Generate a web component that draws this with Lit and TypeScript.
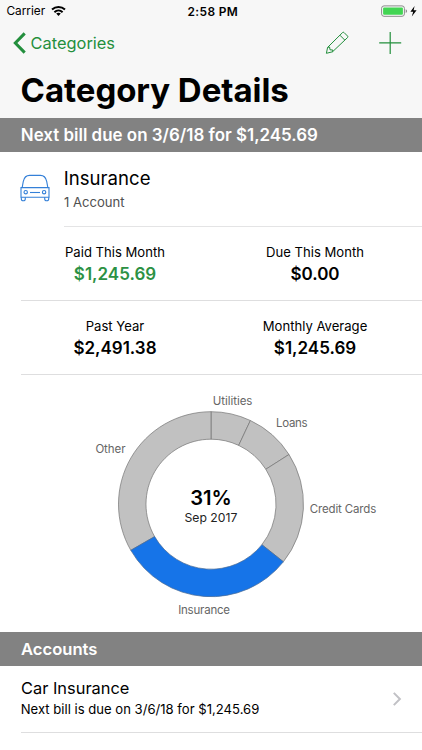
import { LitElement, html, svg, css } from "lit";
import { customElement } from "lit/decorators.js";

interface Slice {
  name: string;
  from: number;
  to: number;
  active?: boolean;
  x: number;
  y: number;
  width: number;
}

const CX = 211;
const CY = 129.2;
const OUTER = 92.5;
const INNER = 65;

const slices: Slice[] = [
  { name: "Utilities", from: 0, to: 25.2, x: 213.6, y: 30, width: 38.4 },
  { name: "Loans", from: 25.2, to: 57.5, x: 276.9, y: 52.4, width: 30.3 },
  { name: "Credit Cards", from: 57.5, to: 128.5, x: 310.6, y: 138.3, width: 65.3 },
  { name: "Other", from: 240.1, to: 360, x: 96.2, y: 78.2, width: 28.9 },
  { name: "Insurance", from: 128.5, to: 240.1, active: true, x: 179, y: 239.2, width: 50.6 },
];

const point = (angle: number, radius: number) => {
  const a = (angle * Math.PI) / 180;
  return `${(CX + radius * Math.sin(a)).toFixed(2)} ${(CY - radius * Math.cos(a)).toFixed(2)}`;
};

const ring = ({ from, to }: Slice) =>
  `M${point(from, OUTER)}A${OUTER} ${OUTER} 0 0 1 ${point(to, OUTER)}` +
  `L${point(to, INNER)}A${INNER} ${INNER} 0 0 0 ${point(from, INNER)}Z`;

const stats = [
  [
    { label: "Paid This Month", value: "$1,245.69", paid: true },
    { label: "Due This Month", value: "$0.00", paid: false },
  ],
  [
    { label: "Past Year", value: "$2,491.38", paid: false },
    { label: "Monthly Average", value: "$1,245.69", paid: false },
  ],
];

@customElement("spending-chart")
export class SpendingChart extends LitElement {
  static styles = css`
    :host { display: block; height: 257px; }
    svg { display: block; }
    .slice { fill: #c1c1c1; stroke: #747474; stroke-width: 0.7; }
    .active { fill: #1674e8; stroke: #4b6a92; }
    .label { font-size: 11.5px; fill: #666; }
    .percent { font-size: 20.2px; font-weight: 600; fill: #000; }
    .month { font-size: 12.2px; fill: #222; }
  `;

  render() {
    return html`<svg width="422" height="257" viewBox="0 0 422 257">
      ${slices.map((s) => svg`
        <path class="slice ${s.active ? "active" : ""}" d=${ring(s)} />
        <text class="label" x=${s.x - 0.8} y=${s.y} textLength=${s.width + 1.2}>${s.name}</text>`)}
      <text class="percent" x="211" y="129.9" text-anchor="middle">31%</text>
      <text class="month" x="210.9" y="146.6" text-anchor="middle">Sep 2017</text>
    </svg>`;
  }
}

@customElement("app-root")
export class AppRoot extends LitElement {
  static styles = css`
    :host {
      display: block;
      width: 422px;
      height: 750px;
      overflow: hidden;
      background: #fff;
      color: #000;
      font-family: Inter, "Liberation Sans", sans-serif;
      white-space: nowrap;
    }
    svg { display: block; flex: none; }
    .header { height: 118px; background: #f7f7f7; }
    .status {
      display: grid;
      grid-template-columns: 1fr auto 1fr;
      align-items: center;
      height: 22px;
      padding: 0 4px 0 6.4px;
      font-size: 11.85px;
    }
    .carrier { display: flex; align-items: center; gap: 6px; }
    .time { font-size: 11.9px; font-weight: 600; letter-spacing: 0.4px; padding-left: 1.4px; }
    .power { display: flex; justify-content: flex-end; align-items: center; }
    .nav {
      display: flex;
      align-items: center;
      height: 42px;
      padding: 0 20px 0 13px;
      color: #238f3d;
    }
    .back { display: flex; align-items: center; gap: 4.6px; flex: 1; font-size: 16.4px; }
    .actions { display: flex; align-items: center; gap: 29px; }
    .title {
      margin: 0;
      padding-left: 20.6px;
      font-size: 33px;
      letter-spacing: -0.05px;
      line-height: 52px;
      font-weight: 700;
    }
    .band {
      height: 34px;
      padding-left: 20.8px;
      background: #828282;
      color: #fff;
      font-size: 16.95px;
      line-height: 34px;
      font-weight: 600;
    }
    .accounts { font-size: 16.6px; padding-left: 21px; }
    .category { display: flex; height: 75px; padding-left: 20px; }
    .car { margin: 22px 14px 0 0; }
    .summary {
      flex: 1;
      padding-top: 14px;
      border-bottom: 1px solid #e4e4e5;
      line-height: 24px;
    }
    .name { font-size: 18.6px; line-height: 25px; margin: 0 0 -1px -0.2px; }
    .count { font-size: 13.1px; color: #505050; }
    .stats {
      display: grid;
      grid-template-columns: 200px 200px;
      box-sizing: border-box;
      height: 74px;
      margin-left: 21px;
      padding: 14px 0 0;
      border-bottom: 1px solid #dededf;
      text-align: center;
      line-height: 22px;
    }
    .stat { margin-left: -6px; margin-right: 6px; }
    .label { font-size: 13.1px; }
    .value { font-size: 17px; font-weight: 600; }
    .paid { color: #2c9144; }
    .account {
      display: flex;
      align-items: center;
      justify-content: space-between;
      box-sizing: border-box;
      height: 67px;
      margin-left: 21px;
      padding-right: 20px;
      border-bottom: 1px solid #dededf;
      line-height: 21px;
    }
    .account-name { font-size: 16.4px; }
    .account-note { font-size: 13.1px; margin-left: -0.3px; }
  `;

  render() {
    return html`
      <div class="header">
        <div class="status">
          <div class="carrier">
            <span>Carrier</span>
            <svg width="15" height="12" viewBox="0 0 15 12" fill="none" stroke="#000" stroke-width="2">
              <path d="M1 4.6C4.7 1.1 10.3 1.1 14 4.6" />
              <path d="M3.4 7.2C5.8 5 9.2 5 11.6 7.2" />
              <path d="M7.5 10.9 5.2 8.6C6.5 7.5 8.5 7.5 9.8 8.6Z" fill="#000" stroke="none" />
            </svg>
          </div>
          <span class="time">2:58 PM</span>
          <div class="power">
            <svg width="37" height="13" viewBox="0 0 37 13">
              <rect x="0.6" y="0.9" width="22.8" height="10.4" rx="2.4" fill="#fafafa" stroke="#8a8a8a" />
              <rect x="2.1" y="2.4" width="19.8" height="7.3" rx="1" fill="#42d553" />
              <path d="M24.7 4.2Q26.1 4.7 26.1 6.1T24.7 8Z" fill="#8a8a8a" />
              <path d="M33.6 1 29.4 6.7H32.2L30.8 11.5 35.6 5.2H32.6Z" fill="#000" />
            </svg>
          </div>
        </div>
        <div class="nav">
          <div class="back">
            <svg width="13" height="22" viewBox="0 0 13 22" fill="none" stroke="currentColor" stroke-width="3">
              <path d="M11.7 1.4 2.3 11 11.7 20.6" />
            </svg>
            <span>Categories</span>
          </div>
          <div class="actions">
            <svg width="24" height="24" viewBox="0 0 24 24" fill="none" stroke="currentColor" stroke-linejoin="round">
              <path d="M1.4 22.3 2.6 16.4 17.6 1.5Q18.3.9 19 1.5L22.6 5.1Q23.2 5.8 22.6 6.5L7.5 20.8Z" />
              <path d="M14.9 4.2 19.7 9M2.6 16.4 4.6 16 5 18.8 7.8 19 7.5 20.8" />
            </svg>
            <svg width="24" height="24" viewBox="0 0 24 24" stroke="currentColor" stroke-width="1.2">
              <path d="M12.2 .9V23M1.2 11.8H23.2" />
            </svg>
          </div>
        </div>
        <h1 class="title">Category Details</h1>
      </div>
      <div class="band">Next bill due on 3/6/18 for $1,245.69</div>
      <div class="category">
        <svg class="car" width="30" height="28" viewBox="0 0 30 28" fill="none" stroke="#3480d8" stroke-width="1.1">
          <path d="M2.2 13.4 3.3 7.4Q4.6 1.4 9.6 1.4H20.4Q25.4 1.4 26.7 7.4L27.8 13.4" />
          <path d="M1 23.2V13.6H29V23.2Z" />
          <path d="M1.3 23.2V24.7Q1.3 26.8 3.3 26.8T5.3 24.7V23.2M24.7 23.2V24.7Q24.7 26.8 26.7 26.8T28.7 24.7V23.2" />
          <circle cx="5.7" cy="18.2" r="1.7" />
          <circle cx="24.1" cy="18.2" r="1.7" />
          <path d="M10 18.5H20" />
        </svg>
        <div class="summary">
          <div class="name">Insurance</div>
          <div class="count">1 Account</div>
        </div>
      </div>
      ${stats.map((row) => html`
        <div class="stats">
          ${row.map((s) => html`
            <div class="stat">
              <div class="label">${s.label}</div>
              <div class="value ${s.paid ? "paid" : ""}">${s.value}</div>
            </div>`)}
        </div>`)}
      <spending-chart></spending-chart>
      <div class="band accounts">Accounts</div>
      <div class="account">
        <div>
          <div class="account-name">Car Insurance</div>
          <div class="account-note">Next bill is due on 3/6/18 for $1,245.69</div>
        </div>
        <svg width="10" height="14" viewBox="0 0 10 14" fill="none" stroke="#c1c1c5" stroke-width="2">
          <path d="M1.8.9 7.9 7 1.8 13.1" />
        </svg>
      </div>
    `;
  }
}
